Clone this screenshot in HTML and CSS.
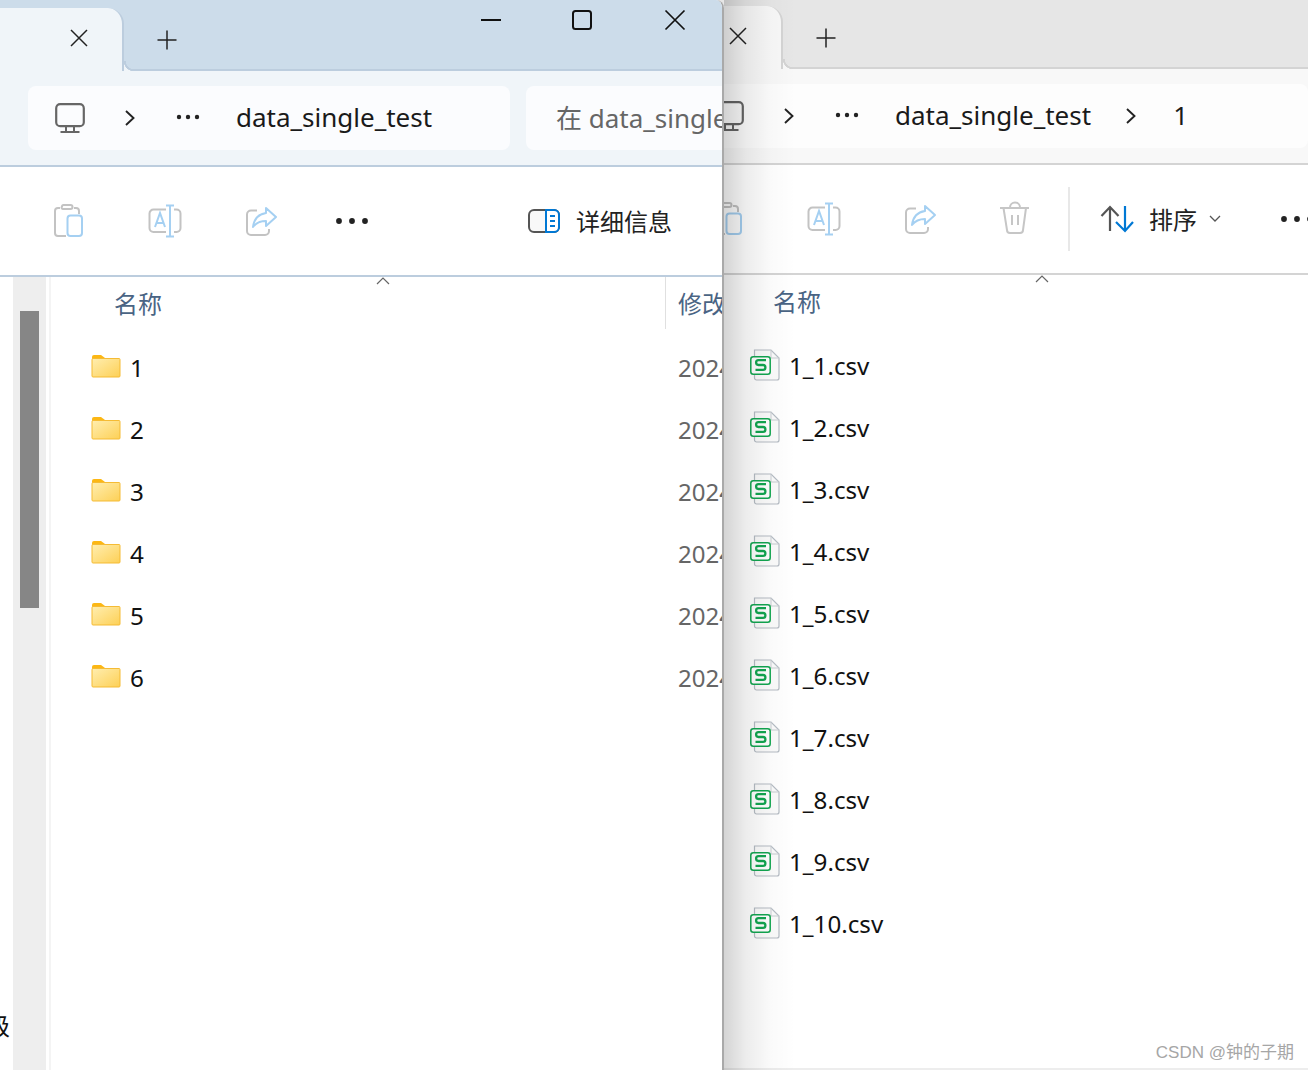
FILE: index.html
```html
<!DOCTYPE html>
<html lang="zh-CN">
<head>
<meta charset="utf-8">
<title>data_single_test</title>
<link rel="stylesheet" href="styles.css">
</head>
<body>
<svg class="defs" aria-hidden="true">
  <symbol id="i-x" viewBox="0 0 18 18"><path d="M1 1L17 17M17 1L1 17" fill="none" stroke="currentColor" stroke-width="1.5"/></symbol>
  <symbol id="i-plus" viewBox="0 0 20 20"><path d="M10 0.5V19.5M0.5 10H19.5" fill="none" stroke="currentColor" stroke-width="1.5"/></symbol>
  <symbol id="i-monitor" viewBox="0 0 30 30"><g fill="none" stroke="#666" stroke-width="2.2"><rect x="1.2" y="1.2" width="27.6" height="22" rx="4"/><path d="M11 24V28M19 24V28M5.5 29H24.5" stroke-width="2"/></g></symbol>
  <symbol id="i-chev" viewBox="0 0 10 16"><path d="M1 1L8.5 8L1 15" fill="none" stroke="#222" stroke-width="1.9"/></symbol>
  <symbol id="i-dots-s" viewBox="0 0 24 6"><g fill="#222"><circle cx="3" cy="3" r="2.2"/><circle cx="12" cy="3" r="2.2"/><circle cx="21" cy="3" r="2.2"/></g></symbol>
  <symbol id="i-paste" viewBox="0 0 36 36"><g fill="none" stroke-width="2"><path d="M15 33H7a3 3 0 0 1-3-3V8a3 3 0 0 1 3-3H9M23 5h2a3 3 0 0 1 3 3v3M11 3.5a1.5 1.5 0 0 1 1.5-1.5h7a1.5 1.5 0 0 1 0 4h-7a1.5 1.5 0 0 1-1.5-2.5z" stroke="#c3c3c3"/><rect x="16.5" y="12.5" width="14.5" height="20.5" rx="3" stroke="#a5d0f2"/></g></symbol>
  <symbol id="i-rename" viewBox="0 0 36 36"><g fill="none" stroke-width="2"><path d="M19 6.5H6.5a4 4 0 0 0-4 4V25a4 4 0 0 0 4 4H19M27 6.5h2.500a4 4 0 0 1 4 4V25a4 4 0 0 1-4 4H27" stroke="#c3c3c3"/><path d="M23 3V33M19 2.500H27M19 33.500H27M8 24L13 10L18 24M10 20H16" stroke="#a5d0f2"/></g></symbol>
  <symbol id="i-share" viewBox="0 0 36 36"><g fill="none" stroke-width="2"><path d="M14 7.500H8a4 4 0 0 0-4 4V28a4 4 0 0 0 4 4H22a4 4 0 0 0 4-4V26" stroke="#c3c3c3"/><path d="M23 5L33 14L23 23V18C17 18 13 20 10 24C11 16 16 11 23 10Z" stroke="#a5d0f2" stroke-linejoin="round"/></g></symbol>
  <symbol id="i-trash" viewBox="0 0 36 36"><g fill="none" stroke="#c6c6c6" stroke-width="2"><path d="M2 7H31M5.500 7L9 29a3 3 0 0 0 3 3H22a3 3 0 0 0 3-3L28 7M12 6.500a5 5 0 0 1 10 0M14 14V24M20 14V24"/></g></symbol>
  <symbol id="i-dots" viewBox="0 0 36 8"><g fill="#222"><circle cx="5" cy="4" r="2.900"/><circle cx="18" cy="4" r="2.900"/><circle cx="31" cy="4" r="2.900"/></g></symbol>
  <symbol id="i-details" viewBox="0 0 32 24"><rect x="1" y="1" width="30" height="22" rx="5" fill="#f8f8f8" stroke="#555" stroke-width="2"/><path d="M18 1H26a5 5 0 0 1 5 5V18a5 5 0 0 1-5 5H18Z" fill="#fff" stroke="#0078d4" stroke-width="2"/><path d="M22 7H27M22 12H27M22 17H27" stroke="#0078d4" stroke-width="2"/></symbol>
  <symbol id="i-sort" viewBox="0 0 34 28"><path d="M10 26V2M1.500 11L10 2L18.500 11" fill="none" stroke="#555" stroke-width="2.200"/><path d="M25 1V26M16 17L25 26L33 17" fill="none" stroke="#0078d4" stroke-width="2.200"/></symbol>
  <symbol id="i-down" viewBox="0 0 12 8"><path d="M1 1L6 6L11 1" fill="none" stroke="#555" stroke-width="1.300"/></symbol>
  <symbol id="i-caret" viewBox="0 0 14 8"><path d="M1 7L7 1L13 7" fill="none" stroke="#666" stroke-width="1.200"/></symbol>
  <linearGradient id="g-folder" x1="0" y1="0" x2="1" y2="1"><stop offset="0" stop-color="#ffeeb0"/><stop offset="1" stop-color="#fdd056"/></linearGradient>
  <symbol id="i-folder" viewBox="0 0 30 24"><path d="M1 3a2 2 0 0 1 2-2H10L14 4V8H1Z" fill="#fcb714"/><rect x="1" y="4.500" width="28" height="18.500" rx="1" fill="url(#g-folder)" stroke="#f5bb34"/></symbol>
  <symbol id="i-csv" viewBox="0 0 30 32"><path d="M4.500 1H21L29 9V29a2 2 0 0 1-2 2H6.500a2 2 0 0 1-2-2Z" fill="#fbfbfb" stroke="#b5bcc4" stroke-width="1.200"/><path d="M21 1V9H29" fill="none" stroke="#c8cdd2" stroke-width="1"/><rect x="0.800" y="7.800" width="19.400" height="17.400" rx="2.500" fill="#fff" stroke="#12a650" stroke-width="1.500"/><path d="M16 11.200H8.500a2.400 2.400 0 0 0 0 4.800H13a2.400 2.400 0 0 1 0 4.800H5.500" fill="none" stroke="#12a650" stroke-width="2.300"/></symbol>
</svg>

<main class="window window-back">
  <header class="titlebar">
    <div class="tab"><svg class="ic-x"><use href="#i-x"/></svg></div>
    <svg class="ic-plus"><use href="#i-plus"/></svg>
  </header>
  <section class="addressbar">
    <div class="crumbs crumbs-wide">
      <svg class="ic-monitor"><use href="#i-monitor"/></svg>
      <svg class="ic-chev"><use href="#i-chev"/></svg>
      <svg class="ic-dots-s"><use href="#i-dots-s"/></svg>
      <span class="crumb">data_single_test</span>
      <svg class="ic-chev ic-chev-2"><use href="#i-chev"/></svg>
      <span class="crumb crumb-last">1</span>
    </div>
  </section>
  <section class="toolbar">
    <svg class="tool"><use href="#i-paste"/></svg>
    <svg class="tool"><use href="#i-rename"/></svg>
    <svg class="tool"><use href="#i-share"/></svg>
    <svg class="tool"><use href="#i-trash"/></svg>
    <span class="tool-sep"></span>
    <svg class="ic-sort"><use href="#i-sort"/></svg>
    <span class="tool-label tool-label-sort">排序</span>
    <svg class="ic-down"><use href="#i-down"/></svg>
    <svg class="ic-dots ic-dots-back"><use href="#i-dots"/></svg>
  </section>
  <section class="content">
    <nav class="nav"></nav>
    <div class="track"><div class="thumb"></div></div>
    <div class="list">
      <div class="list-head"><div class="head-name"><span>名称</span><svg class="ic-caret"><use href="#i-caret"/></svg></div></div>
      <div class="row"><div class="cell"><svg class="ic-file"><use href="#i-csv"/></svg><span>1_1.csv</span></div></div>
      <div class="row"><div class="cell"><svg class="ic-file"><use href="#i-csv"/></svg><span>1_2.csv</span></div></div>
      <div class="row"><div class="cell"><svg class="ic-file"><use href="#i-csv"/></svg><span>1_3.csv</span></div></div>
      <div class="row"><div class="cell"><svg class="ic-file"><use href="#i-csv"/></svg><span>1_4.csv</span></div></div>
      <div class="row"><div class="cell"><svg class="ic-file"><use href="#i-csv"/></svg><span>1_5.csv</span></div></div>
      <div class="row"><div class="cell"><svg class="ic-file"><use href="#i-csv"/></svg><span>1_6.csv</span></div></div>
      <div class="row"><div class="cell"><svg class="ic-file"><use href="#i-csv"/></svg><span>1_7.csv</span></div></div>
      <div class="row"><div class="cell"><svg class="ic-file"><use href="#i-csv"/></svg><span>1_8.csv</span></div></div>
      <div class="row"><div class="cell"><svg class="ic-file"><use href="#i-csv"/></svg><span>1_9.csv</span></div></div>
      <div class="row"><div class="cell"><svg class="ic-file"><use href="#i-csv"/></svg><span>1_10.csv</span></div></div>
    </div>
  </section>
</main>

<div class="drop-shadow"></div>

<main class="window window-front">
  <header class="titlebar">
    <div class="tab"><svg class="ic-x"><use href="#i-x"/></svg></div>
    <svg class="ic-plus"><use href="#i-plus"/></svg>
    <div class="controls">
      <svg class="ctl"><path d="M0 9H20" stroke="#111" stroke-width="2"/></svg>
      <svg class="ctl"><rect x="0" y="0" width="18" height="18" rx="2.500" fill="none" stroke="#111" stroke-width="2"/></svg>
      <svg class="ctl"><path d="M0.500 -0.500L19.500 18.500M19.500 -0.500L0.500 18.500" stroke="#111" stroke-width="1.700"/></svg>
    </div>
  </header>
  <section class="addressbar">
    <div class="crumbs">
      <svg class="ic-monitor"><use href="#i-monitor"/></svg>
      <svg class="ic-chev"><use href="#i-chev"/></svg>
      <svg class="ic-dots-s"><use href="#i-dots-s"/></svg>
      <span class="crumb">data_single_test</span>
    </div>
    <div class="search"><span>在 data_single_test 中搜索</span></div>
  </section>
  <section class="toolbar">
    <svg class="tool"><use href="#i-paste"/></svg>
    <svg class="tool"><use href="#i-rename"/></svg>
    <svg class="tool"><use href="#i-share"/></svg>
    <svg class="ic-dots"><use href="#i-dots"/></svg>
    <svg class="ic-details"><use href="#i-details"/></svg>
    <span class="tool-label">详细信息</span>
  </section>
  <section class="content">
    <nav class="nav"><span class="nav-word">级</span></nav>
    <div class="track"><div class="thumb"></div></div>
    <div class="list">
      <div class="list-head">
        <div class="head-name"><span>名称</span><svg class="ic-caret"><use href="#i-caret"/></svg></div>
        <div class="head-date">修改日期</div>
      </div>
      <div class="row"><div class="cell"><svg class="ic-folder"><use href="#i-folder"/></svg><span>1</span></div><span class="date">2024</span></div>
      <div class="row"><div class="cell"><svg class="ic-folder"><use href="#i-folder"/></svg><span>2</span></div><span class="date">2024</span></div>
      <div class="row"><div class="cell"><svg class="ic-folder"><use href="#i-folder"/></svg><span>3</span></div><span class="date">2024</span></div>
      <div class="row"><div class="cell"><svg class="ic-folder"><use href="#i-folder"/></svg><span>4</span></div><span class="date">2024</span></div>
      <div class="row"><div class="cell"><svg class="ic-folder"><use href="#i-folder"/></svg><span>5</span></div><span class="date">2024</span></div>
      <div class="row"><div class="cell"><svg class="ic-folder"><use href="#i-folder"/></svg><span>6</span></div><span class="date">2024</span></div>
    </div>
  </section>
</main>

<div class="watermark">CSDN @钟的子期</div>
</body>
</html>
```

FILE: styles.css
```css
html, body {
  margin: 0;
  height: 100%;
  overflow: hidden;
  background: #fff;
}
body {
  position: relative;
  font-family: "Noto Sans", "Noto Sans CJK SC", sans-serif;
  font-size: 24px;
  color: #1a1a1a;
}
.defs { position: absolute; width: 0; height: 0; }
svg { display: block; flex: none; overflow: visible; }

/* windows on a desktop */
.window {
  position: absolute;
  display: flex;
  flex-direction: column;
  overflow: hidden;
  box-sizing: border-box;
}
.window-front {
  left: 0; top: 0;
  width: 724px; height: 1070px;
  z-index: 3;
  background: #fff;
  border-right: 2px solid #a9a9a9;
  border-top-right-radius: 8px;
  --title: #ccdcea;
  --panel: #f0f5f9;
  --box: #fbfcfe;
  --line: #bccdde;
}
.window-back {
  left: 659px; top: -2px;
  width: 649px; height: 1070px;
  z-index: 1;
  background: #fff;
  --title: #e6e6e6;
  --panel: #f8f8f8;
  --box: #fdfdfd;
  --line: #d4d4d4;
}
.drop-shadow {
  position: absolute;
  left: 724px; top: 0; bottom: 0;
  width: 72px;
  z-index: 2;
  background: linear-gradient(to right, rgba(0,0,0,.17), rgba(0,0,0,.075) 30%, rgba(0,0,0,.02) 65%, rgba(0,0,0,0));
}
.watermark {
  position: absolute;
  right: 14px; top: 1041px;
  z-index: 4;
  font-family: "Liberation Sans", "Noto Sans CJK SC", sans-serif;
  font-size: 17px;
  line-height: 24px;
  color: #a6a6a6;
}
body::after {
  content: "";
  position: absolute;
  left: 724px; right: 0; bottom: 0;
  height: 2px;
  background: #ededed;
}

/* title bar */
.titlebar {
  flex: none;
  display: flex;
  height: 71px;
  box-sizing: border-box;
  background: var(--title);
  border-bottom: 2px solid var(--line);
  color: #222;
}
.tab {
  position: relative;
  flex: none;
  box-sizing: border-box;
  width: 124px;
  height: 63px;
  margin-top: 8px;
  display: flex;
  justify-content: flex-end;
  padding: 21px 34px 0 0;
  background: var(--panel);
  border-right: 2px solid var(--line);
  border-top-right-radius: 16px;
}
.tab::after {
  content: "";
  position: absolute;
  left: 100%;
  margin-left: 2px;
  bottom: 0;
  width: 10px; height: 10px;
  background: radial-gradient(circle at 100% 0, transparent 8px, var(--line) 8.5px, var(--line) 10px, var(--panel) 10.5px);
}
.ic-x { width: 18px; height: 18px; }
.ic-plus { width: 20px; height: 20px; margin: 30px 0 0 33px; }
.controls {
  display: flex;
  gap: 72px;
  margin: 11px 0 0 304px;
}
.ctl { width: 20px; height: 18px; }

/* address bar */
.addressbar {
  flex: none;
  height: 96px;
  box-sizing: border-box;
  display: flex;
  gap: 16px;
  padding: 15px 0 15px 28px;
  background: var(--panel);
  border-bottom: 2px solid var(--line);
}
.crumbs, .search {
  flex: none;
  display: flex;
  align-items: center;
  height: 64px;
  border-radius: 8px;
  background: var(--box);
  font-size: 26px;
}
.crumbs { width: 482px; padding-left: 27px; box-sizing: border-box; }
.crumbs-wide { width: 621px; }
.search { width: 400px; padding-left: 30px; box-sizing: border-box; color: #666; white-space: nowrap; }
.search span { margin-top: -3px; }
.ic-monitor { width: 30px; height: 30px; }
.ic-chev { width: 10px; height: 16px; margin-left: 40px; }
.ic-chev-2 { margin-left: 35px; }
.ic-dots-s { width: 24px; height: 6px; margin-left: 41px; margin-bottom: 3px; }
.crumb { margin-left: 36px; margin-top: -3px; white-space: nowrap; }
.crumb-last { margin-left: 37px; }

/* toolbar */
.toolbar {
  flex: none;
  height: 110px;
  box-sizing: border-box;
  display: flex;
  align-items: center;
  padding-left: 51px;
  background: #fff;
  border-bottom: 2px solid var(--line);
}
.tool { width: 36px; height: 36px; margin-right: 60px; }
.ic-dots { width: 36px; height: 8px; margin-left: -5px; }
.ic-details { width: 32px; height: 24px; margin-left: 158px; }
.tool-label { flex: none; margin: -2px 0 0 16px; white-space: nowrap; color: #222; }
.tool-sep { flex: none; width: 2px; height: 64px; background: #e8e8e8; margin-left: -26px; }
.ic-sort { width: 34px; height: 28px; margin-left: 30px; }
.tool-label-sort { margin-left: 15px; }
.ic-down { width: 12px; height: 8px; margin-left: 12px; }
.ic-dots-back { margin-left: 58px; }

/* content */
.content { flex: 1; display: flex; min-height: 0; background: #fff; }
.nav {
  flex: none;
  width: 13px;
  box-sizing: border-box;
  overflow: hidden;
  display: flex;
  flex-direction: column;
  justify-content: flex-end;
  align-items: flex-end;
  padding: 0 3px 28px 0;
  line-height: 32px;
  color: #111;
}
.nav-word { flex: none; }
.track {
  flex: none;
  width: 33px;
  background: #eee;
  padding: 34px 7px 0;
  box-sizing: border-box;
}
.thumb { width: 19px; height: 297px; background: #868686; }
.list {
  flex: 1;
  margin-left: 3px;
  border-left: 2px solid #f4f4f4;
  display: flex;
  flex-direction: column;
  min-width: 0;
}
.list-head { flex: none; display: flex; height: 60px; }
.head-name {
  flex: none;
  width: 615px;
  box-sizing: border-box;
  display: flex;
  align-items: center;
  padding-left: 63px;
  color: #4a6484;
  border-right: 1px solid #e0e0e0;
  height: 52px;
  line-height: 53px;
}
.window-back .head-name { border-right-color: transparent; }
.ic-caret { width: 14px; height: 8px; margin: -44px 0 0 214px; }
.head-date { padding-left: 12px; line-height: 53px; color: #4a6484; white-space: nowrap; }
.row {
  flex: none;
  height: 62px;
  display: flex;
  align-items: center;
  padding-left: 40px;
  color: #111;
}
.cell { flex: none; width: 587px; display: flex; align-items: center; gap: 9px; font-size: 24.2px; }
.cell span, .date { margin-top: -2px; }
.date { color: #666; white-space: nowrap; }
.ic-folder { width: 30px; height: 24px; margin-bottom: 5px; }
.ic-file { width: 30px; height: 32px; margin-bottom: 3px; }
```
